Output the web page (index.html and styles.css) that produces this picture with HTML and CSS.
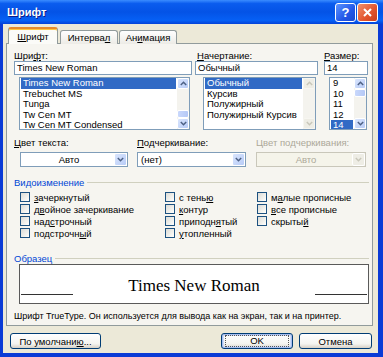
FILE: index.html
```html
<!DOCTYPE html>
<html lang="ru">
<head>
    <meta charset="UTF-8">
    <title>Шрифт</title>
    <link rel="stylesheet" href="styles.css">
</head>
<body>
    <div class="window">
        <div class="titlebar">
            <span class="title">Шрифт</span>
            <span class="tb-btn help">?</span>
            <span class="tb-btn close">
                <svg width="11" height="11" viewBox="0 0 11 11"><path d="M2 2 L9 9 M9 2 L2 9" stroke="#fff" stroke-width="2" fill="none"/></svg>
            </span>
        </div>
        <div class="frame">
            <div class="client">
                <div class="tabs">
                    <span class="tab active"><u>Ш</u>рифт</span>
                    <span class="tab tab-wide">Интерва<u>л</u></span>
                    <span class="tab tab-wide">Ан<u>и</u>мация</span>
                </div>
                <div class="panel">
                    <div class="row-fonts">
                        <div class="col col-font">
                            <span class="lbl">Шри<u>ф</u>т:</span>
                            <div class="field">Times New Roman</div>
                            <div class="list list-font">
                                <div class="items">
                                    <div class="item sel">Times New Roman</div>
                                    <div class="item">Trebuchet MS</div>
                                    <div class="item">Tunga</div>
                                    <div class="item">Tw Cen MT</div>
                                    <div class="item">Tw Cen MT Condensed</div>
                                </div>
                                <div class="vscroll">
                                    <span class="sb-btn"><svg width="7" height="5" viewBox="0 0 7 5"><path d="M0.8 4 L3.5 1.3 L6.2 4" stroke="#4D6185" stroke-width="1.5" fill="none"/></svg></span>
                                    <span class="sb-space thumb-bottom"><span class="sb-thumb"></span></span>
                                    <span class="sb-btn"><svg width="7" height="5" viewBox="0 0 7 5"><path d="M0.8 1 L3.5 3.7 L6.2 1" stroke="#4D6185" stroke-width="1.5" fill="none"/></svg></span>
                                </div>
                            </div>
                        </div>
                        <div class="col col-style">
                            <span class="lbl lbl-pad"><u>Н</u>ачертание:</span>
                            <div class="field">Обычный</div>
                            <div class="list list-style">
                                <div class="items">
                                    <div class="item sel">Обычный</div>
                                    <div class="item">Курсив</div>
                                    <div class="item">Полужирный</div>
                                    <div class="item">Полужирный Курсив</div>
                                </div>
                                <div class="vscroll disabled">
                                    <span class="sb-btn"><svg width="7" height="5" viewBox="0 0 7 5"><path d="M0.8 4 L3.5 1.3 L6.2 4" stroke="#C9C7BA" stroke-width="1.5" fill="none"/></svg></span>
                                    <span class="sb-space"></span>
                                    <span class="sb-btn"><svg width="7" height="5" viewBox="0 0 7 5"><path d="M0.8 1 L3.5 3.7 L6.2 1" stroke="#C9C7BA" stroke-width="1.5" fill="none"/></svg></span>
                                </div>
                            </div>
                        </div>
                        <div class="col col-size">
                            <span class="lbl"><u>Р</u>азмер:</span>
                            <div class="field">14</div>
                            <div class="list list-size">
                                <div class="items">
                                    <div class="item">9</div>
                                    <div class="item">10</div>
                                    <div class="item">11</div>
                                    <div class="item">12</div>
                                    <div class="item sel">14</div>
                                </div>
                                <div class="vscroll">
                                    <span class="sb-btn"><svg width="7" height="5" viewBox="0 0 7 5"><path d="M0.8 4 L3.5 1.3 L6.2 4" stroke="#4D6185" stroke-width="1.5" fill="none"/></svg></span>
                                    <span class="sb-space"><span class="sb-thumb"></span></span>
                                    <span class="sb-btn"><svg width="7" height="5" viewBox="0 0 7 5"><path d="M0.8 1 L3.5 3.7 L6.2 1" stroke="#4D6185" stroke-width="1.5" fill="none"/></svg></span>
                                </div>
                            </div>
                        </div>
                    </div>

                    <div class="row-colors">
                        <div class="col col-color">
                            <span class="lbl"><u>Ц</u>вет текста:</span>
                            <div class="combo combo-color">
                                <span class="combo-text center">Авто</span>
                                <span class="combo-btn"><svg width="7" height="5" viewBox="0 0 7 5"><path d="M0.8 1 L3.5 3.7 L6.2 1" stroke="#4D6185" stroke-width="1.5" fill="none"/></svg></span>
                            </div>
                        </div>
                        <div class="col col-under">
                            <span class="lbl"><u>П</u>одчеркивание:</span>
                            <div class="combo">
                                <span class="combo-text">(нет)</span>
                                <span class="combo-btn"><svg width="7" height="5" viewBox="0 0 7 5"><path d="M0.8 1 L3.5 3.7 L6.2 1" stroke="#4D6185" stroke-width="1.5" fill="none"/></svg></span>
                            </div>
                        </div>
                        <div class="col col-ucolor">
                            <span class="lbl muted">Цвет подчеркивания:</span>
                            <div class="combo disabled">
                                <span class="combo-text center">Авто</span>
                                <span class="combo-btn"><svg width="7" height="5" viewBox="0 0 7 5"><path d="M0.8 1 L3.5 3.7 L6.2 1" stroke="#C9C7BA" stroke-width="1.5" fill="none"/></svg></span>
                            </div>
                        </div>
                    </div>

                    <div class="group-head"><span>Видоизменение</span></div>
                    <div class="effects">
                        <div class="fx-col fx-col1">
                            <div class="check"><span class="box"></span><u>з</u>ачеркнутый</div>
                            <div class="check"><span class="box"></span>д<u>в</u>ойное зачеркивание</div>
                            <div class="check"><span class="box"></span>над<u>с</u>трочный</div>
                            <div class="check"><span class="box"></span>подстрочн<u>ы</u>й</div>
                        </div>
                        <div class="fx-col fx-col2">
                            <div class="check"><span class="box"></span>с тень<u>ю</u></div>
                            <div class="check"><span class="box"></span><u>к</u>онтур</div>
                            <div class="check"><span class="box"></span>приподн<u>я</u>тый</div>
                            <div class="check"><span class="box"></span><u>у</u>топленный</div>
                        </div>
                        <div class="fx-col">
                            <div class="check"><span class="box"></span>м<u>а</u>лые прописные</div>
                            <div class="check"><span class="box"></span><u>в</u>се прописные</div>
                            <div class="check"><span class="box"></span>скрыты<u>й</u></div>
                        </div>
                    </div>

                    <div class="group-head group-sample"><span>Образец</span></div>
                    <div class="sample">
                        <span class="sample-line"></span>
                        <span class="sample-text">Times New Roman</span>
                        <span class="sample-line"></span>
                    </div>
                    <div class="note">Шрифт TrueType. Он используется для вывода как на экран, так и на принтер.</div>
                </div>

                <div class="buttons">
                    <span class="btn btn-default">По умолчани<u>ю</u>...</span>
                    <span class="spacer"></span>
                    <span class="btn btn-ok"><span class="focus">OK</span></span>
                    <span class="btn btn-cancel">Отмена</span>
                </div>
            </div>
        </div>
    </div>
</body>
</html>
```

FILE: styles.css
```css
body {
    margin: 0;
    font-family: "Liberation Sans", Arial, sans-serif;
    font-size: 9.5px;
    color: #000;
    background: #fff;
}

.window {
    width: 383px;
    height: 357px;
    display: flex;
    flex-direction: column;
    background: #0A3BD6;
}

/* title bar */
.titlebar {
    height: 24px;
    display: flex;
    align-items: center;
    padding: 0 5px 0 7px;
    background: linear-gradient(#3A8CFF, #0A5CEE 15%, #0453E6 50%, #0660F5 85%, #0442D8);
}

.title {
    flex: 1;
    color: #fff;
    font-weight: bold;
    font-size: 11px;
    text-shadow: 1px 1px #0A1E8C;
}

.tb-btn {
    width: 21px;
    height: 19px;
    box-sizing: border-box;
    border: 1px solid #fff;
    border-radius: 3px;
    display: flex;
    align-items: center;
    justify-content: center;
    color: #fff;
    font-weight: bold;
    font-size: 13px;
}

.help {
    background: linear-gradient(135deg, #5C94FF, #2257E8 60%, #1A48D0);
    margin-right: 1px;
}

.close {
    background: linear-gradient(135deg, #F0906C, #E2532C 60%, #C93E1C);
}

/* window body */
.frame {
    flex: 1;
    display: flex;
    padding: 0 5px 4px 3px;
}

.client {
    flex: 1;
    display: flex;
    flex-direction: column;
    background: #ECE9D8;
}

.tabs {
    display: flex;
    align-items: flex-end;
    height: 17px;
    padding: 3px 0 0 5px;
    margin-bottom: -1px;
    position: relative;
    z-index: 1;
}

.tab {
    width: 50px;
    height: 14px;
    box-sizing: border-box;
    border: 1px solid #919B9C;
    border-bottom: none;
    border-radius: 3px 3px 0 0;
    background: linear-gradient(#FEFEFE, #ECEBE6);
    text-align: center;
    line-height: 13px;
    margin-right: 1px;
}

.tab-wide {
    width: 58px;
}

.tab.active {
    height: 17px;
    margin-right: 2px;
    border-top: 2px solid #E68B2C;
    box-shadow: inset 0 1px #FFC73C;
    background: #FBFBF8;
    line-height: 15px;
}

.panel {
    height: 283px;
    box-sizing: border-box;
    margin: 0 5px 0 3px;
    border: 1px solid #919B9C;
    background: #F6F5F0;
    padding: 7px 3px 0 7px;
}

.lbl {
    display: block;
    height: 10px;
    line-height: 10px;
    white-space: nowrap;
}

.lbl-pad {
    padding-left: 2px;
}

.muted {
    color: #ACA899;
}

/* font / style / size */
.row-fonts {
    display: flex;
}

.col-font {
    width: 178px;
}

.col-style {
    width: 123px;
    margin-left: 3px;
}

.col-size {
    width: 44px;
    margin-left: 6px;
}

.field {
    height: 14px;
    box-sizing: border-box;
    border: 1px solid #7F9DB9;
    background: #fff;
    padding-left: 2px;
    line-height: 12px;
}

.list {
    height: 53px;
    margin-top: 2px;
    box-sizing: border-box;
    border: 1px solid #7F9DB9;
    background: #fff;
    display: flex;
}

.list-font {
    margin: 2px 2px 0 5px;
}

.list-style {
    margin: 2px 2px 0 8px;
}

.list-size {
    margin: 2px 1px 0 5px;
}

.items {
    flex: 1;
    padding: 0 1px;
    overflow: hidden;
}

.item {
    line-height: 10.5px;
    padding-left: 2px;
    white-space: nowrap;
}

.item.sel {
    background: #316AC5;
    color: #fff;
}

.vscroll {
    width: 12px;
    display: flex;
    flex-direction: column;
    background: #F4F3EE;
}

.sb-btn {
    height: 11px;
    box-sizing: border-box;
    border: 1px solid #fff;
    border-radius: 2px;
    background: linear-gradient(135deg, #D9E5FD, #B8CCF7);
    display: flex;
    align-items: center;
    justify-content: center;
}

.disabled .sb-btn {
    background: #EEEDE5;
    border-color: #F7F6F1;
}

.sb-space {
    flex: 1;
    display: flex;
    flex-direction: column;
}

.thumb-bottom {
    justify-content: flex-end;
}

.sb-thumb {
    height: 8px;
    box-sizing: border-box;
    border: 1px solid #fff;
    border-radius: 2px;
    background: linear-gradient(90deg, #C9D8FC, #B4C8F6);
}

/* colour and underline combos */
.row-colors {
    display: flex;
    margin-top: 8px;
}

.col-color {
    width: 114px;
}

.col-under {
    width: 109px;
    margin-left: 9px;
}

.col-ucolor {
    width: 110px;
    margin-left: 10px;
}

.combo {
    height: 15px;
    margin-top: 4px;
    box-sizing: border-box;
    border: 1px solid #7F9DB9;
    background: #fff;
    display: flex;
}

.combo-color {
    margin-left: 6px;
}

.combo.disabled {
    border-color: #C9C7BA;
    background: #F5F4EA;
    color: #ACA899;
}

.combo-text {
    flex: 1;
    line-height: 13px;
    padding-left: 3px;
}

.combo-text.center {
    text-align: center;
}

.combo-btn {
    width: 13px;
    box-sizing: border-box;
    border: 1px solid #fff;
    border-radius: 2px;
    background: linear-gradient(135deg, #D9E5FD, #B8CCF7);
    display: flex;
    align-items: center;
    justify-content: center;
}

.combo.disabled .combo-btn {
    background: #EEEDE5;
}

/* groups */
.group-head {
    display: flex;
    align-items: center;
    height: 10px;
    margin-top: 10px;
    color: #0046D5;
}

.group-head::after {
    content: "";
    flex: 1;
    height: 1px;
    margin: 1px 0 0 3px;
    background: #D0D0BF;
}

.group-sample {
    margin-top: 14px;
}

.effects {
    display: flex;
    margin: 4px 0 0 6px;
}

.fx-col1 {
    width: 145px;
}

.fx-col2 {
    width: 92px;
}

.check {
    display: flex;
    align-items: center;
    height: 12px;
    white-space: nowrap;
}

.box {
    width: 10px;
    height: 10px;
    box-sizing: border-box;
    border: 1px solid #1C5180;
    background: linear-gradient(135deg, #DCDCD7, #F4F4F0 70%, #fff);
    margin-right: 4px;
}

.sample {
    height: 40px;
    margin: 1px 0 0 5px;
    box-sizing: border-box;
    border: 1px solid #5A5A5A;
    background: #fff;
    display: flex;
    align-items: flex-start;
    justify-content: space-between;
    padding: 0 1px;
}

.sample-line {
    width: 52px;
    height: 1px;
    margin-top: 29px;
    background: #333;
}

.sample-text {
    font-family: "Liberation Serif", "Times New Roman", serif;
    font-size: 17px;
    line-height: 17px;
    margin-top: 12px;
}

.note {
    margin-top: 7px;
    height: 10px;
    line-height: 10px;
    font-size: 9px;
    white-space: nowrap;
}

/* bottom buttons */
.buttons {
    display: flex;
    margin: 7px 6px 0 7px;
}

.spacer {
    flex: 1;
}

.btn {
    height: 16px;
    box-sizing: border-box;
    border: 1px solid #003C74;
    border-radius: 3px;
    background: linear-gradient(#FFFFFF, #F4F4F0 70%, #D6D0C5);
    display: flex;
    align-items: center;
    justify-content: center;
}

.btn-default {
    width: 91px;
}

.btn-ok {
    width: 72px;
    box-shadow: inset 0 0 0 1px #A7BEEF, inset 0 0 0 2px #CEDDF8;
}

.btn-ok .focus {
    width: 62px;
    height: 10px;
    line-height: 10px;
    text-align: center;
    border: 1px dotted #555;
}

.btn-cancel {
    width: 73px;
    margin-left: 6px;
}
```
